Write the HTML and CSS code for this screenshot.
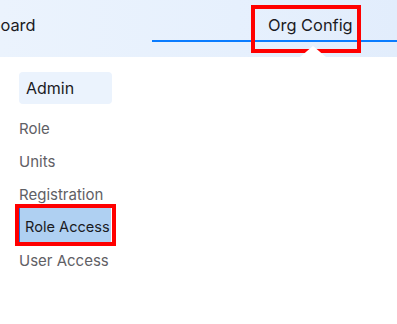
FILE: index.html
```
<!DOCTYPE html>
<html>
<head>
<meta charset="utf-8">
<link rel="stylesheet" href="styles.css">
</head>
<body>
<header class="topbar">
  <div class="tab tab-dashboard">Dashboard</div>
  <div class="tab tab-org">Org Config<span class="notch"></span></div>
  <span class="indicator"></span>
</header>
<main class="content">
  <nav class="sidenav">
    <div class="group-title">Admin</div>
    <ul class="menu">
      <li class="menu-item">Role</li>
      <li class="menu-item">Units</li>
      <li class="menu-item">Registration</li>
      <li class="menu-item active">Role Access</li>
      <li class="menu-item after-active">User Access</li>
    </ul>
  </nav>
</main>
</body>
</html>
```
FILE: styles.css
```
* { box-sizing: border-box; }
html, body {
  margin: 0;
  padding: 0;
  background: #ffffff;
  font-family: Inter, "Noto Sans", sans-serif;
  color: #1b1b1f;
}
.topbar {
  position: relative;
  height: 57px;
  display: flex;
  align-items: flex-start;
  background: linear-gradient(90deg, #ebf3fd 0%, #e6f0fd 60%, #e2edfc 100%);
}
.tab {
  font-size: 16.4px;
  line-height: 20px;
  white-space: nowrap;
}
.tab-dashboard {
  flex: 0 0 100px;
  margin-left: -49px;
  padding-top: 15px;
  color: #1b1b1f;
}
.tab-org {
  position: relative;
  margin-top: 9px;
  margin-left: 204px;
  width: 102px;
  height: 40px;
  padding: 6px 0 0 13px;
  outline: 4px solid #ff0000;
  z-index: 2;
}
.notch {
  position: absolute;
  left: 45px;
  top: 37px;
  width: 0;
  height: 0;
  border-left: 13px solid transparent;
  border-right: 13px solid transparent;
  border-bottom: 11px solid #ffffff;
}
.indicator {
  position: absolute;
  left: 152px;
  right: 0;
  top: 40px;
  height: 2px;
  background: #0a7cff;
  z-index: 1;
}
.content {
  padding: 15px 0 0 19px;
}
.sidenav {
  width: 93px;
}
.group-title {
  height: 32px;
  line-height: 32px;
  padding-left: 7px;
  font-size: 16px;
  color: #1b1b1f;
  background: #ebf3fd;
  border-radius: 4px;
}
.menu {
  list-style: none;
  margin: 8px 0 0 0;
  padding: 0;
}
.menu-item {
  height: 33px;
  line-height: 33px;
  font-size: 15px;
  color: #5f6065;
  white-space: nowrap;
}
.menu-item.active {
  margin-top: -3px;
  height: 34px;
  line-height: 30px;
  padding-top: 4px;
  padding-left: 5px;
  font-size: 14.6px;
  overflow: hidden;
  color: #1b1b1f;
  background: #afd0f2;
  border-left: 1px solid #1a73e8;
  border-right: 1px solid #ffffff;
  outline: 4px solid #ff0000;
}
.menu-item.after-active {
  margin-top: 2px;
}
```
